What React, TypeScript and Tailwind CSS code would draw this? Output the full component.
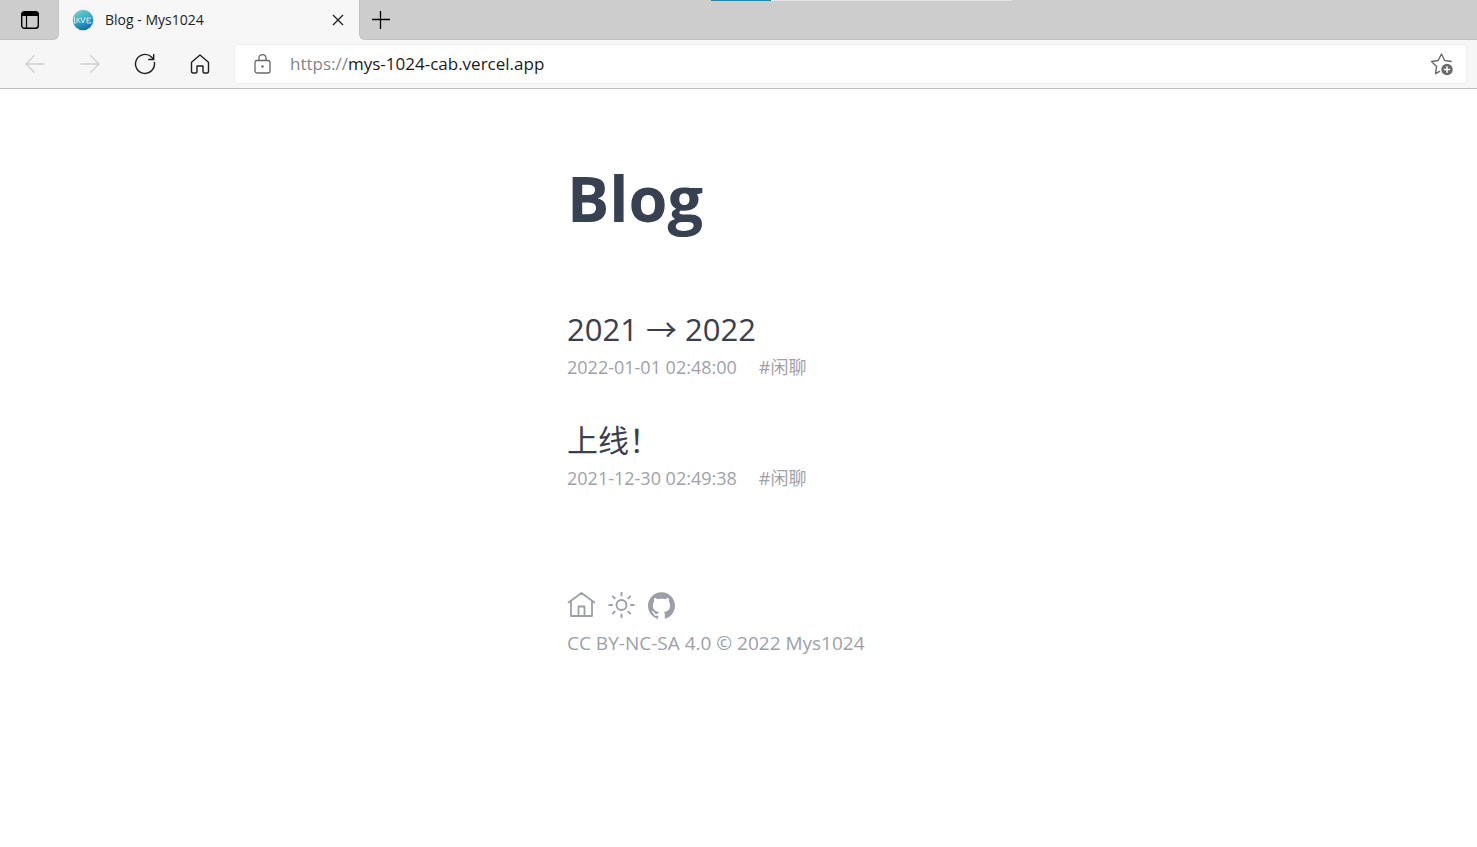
import type { ReactNode } from 'react';
import { SiGithub } from 'react-icons/si';

type Post = { title: string; date: string; tag: string };

const posts: Post[] = [
  { title: '2021 → 2022', date: '2022-01-01 02:48:00', tag: '#闲聊' },
  { title: '上线！', date: '2021-12-30 02:49:38', tag: '#闲聊' },
];

function IconButton({ label, disabled, className, children }: { label: string; disabled?: boolean; className: string; children: ReactNode }) {
  return (
    <button type="button" aria-label={label} disabled={disabled} className={`flex shrink-0 items-center justify-center ${className}`}>
      {children}
    </button>
  );
}

function TabStrip() {
  return (
    <div className="relative flex h-10 bg-[#f7f7f7]">
      <div className="flex w-[59px] shrink-0 rounded-br-md border-r border-b border-[#c2c2c2] bg-[#cdcdcd]">
        <IconButton label="Tab actions" className="w-[59px] text-black">
          <svg width="20" height="20" viewBox="0 0 20 20" fill="none" stroke="currentColor">
            <rect x="1.7" y="1.7" width="16.6" height="16.6" rx="2.8" strokeWidth="1.4" />
            <path d="M1.5 6V4a2.5 2.5 0 0 1 2.5-2.5h12A2.5 2.5 0 0 1 18.5 4v2z" fill="currentColor" stroke="none" />
            <path d="M6.5 5.5v12.5" strokeWidth="1.2" />
          </svg>
        </IconButton>
      </div>
      <div className="flex w-[300px] shrink-0 items-center rounded-tr-md bg-[#f7f7f7] pr-[11px] pl-3">
        <svg width="24" height="24" viewBox="0 0 24 24" aria-hidden="true">
          <defs>
            <linearGradient id="favicon" x1="0.3" y1="0" x2="0.7" y2="1">
              <stop offset="0" stopColor="#72d4cc" />
              <stop offset="0.5" stopColor="#35a5c4" />
              <stop offset="1" stopColor="#1762a8" />
            </linearGradient>
          </defs>
          <circle cx="12" cy="12" r="10.3" fill="url(#favicon)" />
          <g fill="none" stroke="#d9f1f6" strokeWidth="0.9">
            <path d="M3.5 9v6M2.5 15h2.5M6 15v-5M6 12.5l3-2.5M7 12l2.5 3" />
            <path d="M10 10l2 5 2-5M9.500 10h1.500M13 10h1.700" />
            <path d="M19.500 11v-1h-3.500v5h3.800v-1.300M16 12.400h2.500" />
          </g>
        </svg>
        <span className="ml-[10px] flex-1 text-[14px] leading-5 text-[#222]">Blog - Mys1024</span>
        <IconButton label="Close tab" className="size-[20px] text-[#222]">
          <svg width="12" height="12" viewBox="0 0 12 12" fill="none" stroke="currentColor" strokeWidth="1.4">
            <path d="M1 1l10 10M11 1L1 11" />
          </svg>
        </IconButton>
      </div>
      <div className="flex flex-1 items-center rounded-bl-md border-b border-l border-[#c2c2c2] bg-[#cdcdcd]">
        <IconButton label="New tab" className="ml-1 size-[34px] text-black">
          <svg width="18" height="18" viewBox="0 0 18 18" fill="none" stroke="currentColor" strokeWidth="1.3">
            <path d="M8.500 0v18M0 8.500h18" />
          </svg>
        </IconButton>
      </div>
      <div className="absolute top-0 left-[711px] flex h-px w-[301px] bg-[#e4e4e4]">
        <div className="w-[60px] bg-[#2487a8]" />
      </div>
    </div>
  );
}

function Toolbar() {
  return (
    <div className="flex h-[49px] items-center border-b border-[#bcbcbc] bg-[#f6f6f6] pr-[11px] pb-px pl-[7px]">
      <IconButton label="Back" disabled className="w-[55px] text-[#d0d0d0]">
        <svg width="20" height="20" viewBox="0 0 20 20" fill="none" stroke="currentColor" strokeWidth="1.4">
          <path d="M19.5 10H1M9.5 1.5L1 10l8.5 8.5" />
        </svg>
      </IconButton>
      <IconButton label="Forward" disabled className="w-[55px] text-[#d0d0d0]">
        <svg width="20" height="20" viewBox="0 0 20 20" fill="none" stroke="currentColor" strokeWidth="1.4">
          <path d="M.5 10H19M10.5 1.5L19 10l-8.5 8.5" />
        </svg>
      </IconButton>
      <IconButton label="Refresh" className="w-[55px] text-[#1f1f1f]">
        <svg width="22" height="22" viewBox="0 0 22 22" fill="none" stroke="currentColor" strokeWidth="1.4">
          <path d="M20.3 9A9.5 9.5 0 1 1 17.5 4l2 2.3M19.7 1v5.5h-5.5" />
        </svg>
      </IconButton>
      <IconButton label="Home" className="w-[55px] text-[#1f1f1f]">
        <svg width="20" height="20" viewBox="0 0 20 20" fill="none" stroke="currentColor" strokeWidth="1.4" strokeLinejoin="round">
          <path d="M1.5 8.3L10 1l8.5 7.3V17.500q0 1.500-1.500 1.500h-2.500q-1.500 0-1.500-1.500V12H7v5.500Q7 19 5.500 19H3q-1.500 0-1.500-1.500z" />
        </svg>
      </IconButton>
      <div className="ml-2 flex h-[38px] min-w-0 flex-1 items-center rounded bg-white pr-3 pl-[18px] shadow-[0_0_2px_#e4e4e4]">
        <svg width="19" height="20" viewBox="0 0 18 20" fill="none" stroke="#686868" strokeWidth="1.3" aria-hidden="true">
          <rect x="1.5" y="6.500" width="15" height="12.500" rx="2" />
          <path d="M5.500 6.500V4a3.500 3.500 0 0 1 7 0v2.500" />
          <circle cx="9" cy="12.500" r="1.200" fill="#686868" stroke="none" />
        </svg>
        <a href="https://mys-1024-cab.vercel.app" className="ml-[18px] flex-1 text-[17px] leading-6 text-[#1a1a1a]">
          <span className="text-[#858585]">https://</span>mys-1024-cab.vercel.app
        </a>
        <IconButton label="Add to favorites" className="size-6 text-[#696969]">
          <svg width="24" height="24" viewBox="0 0 24 24" fill="none" stroke="currentColor" strokeWidth="1.4" strokeLinejoin="round">
            <path d="M10 19.200l-4.500 2.500 1.100-7.200L1.500 9.500l6.700-1L11.500 2l3.200 6.500 7 1" />
            <circle cx="17" cy="17.500" r="5.700" fill="currentColor" stroke="none" />
            <path d="M17 14.300v6.400M13.800 17.500h6.400" stroke="#fff" strokeWidth="1.500" />
          </svg>
        </IconButton>
      </div>
    </div>
  );
}

function HouseIcon() {
  return (
    <svg width="28" height="28" viewBox="0 0 28 28" fill="none" stroke="currentColor" strokeWidth="1.8" strokeLinejoin="round" strokeLinecap="round">
      <path d="M1.500 11.500L14.500 2l13 9.500M4 9.800V25h21V9.800M11.500 25v-9.500h6V25" />
    </svg>
  );
}

function SunIcon() {
  return (
    <svg width="28" height="28" viewBox="0 0 28 28" fill="none" stroke="currentColor" strokeWidth="1.9">
      <circle cx="14.500" cy="14" r="5" />
      <path d="M14.500 1v4.300M14.500 22.700V27M1.500 14h4.300M23.200 14h4.300M5.300 4.800l3 3M20.700 20.200l3 3M23.700 4.800l-3 3M8.300 20.200l-3 3" />
    </svg>
  );
}

export default function App() {
  return (
    <div className="min-h-screen bg-white font-['Open_Sans','Noto_Sans_CJK_SC',sans-serif]">
      <header>
        <TabStrip />
        <Toolbar />
      </header>
      <div className="mx-auto max-w-[343px] pt-[65px] pb-16">
        <main>
          <h1 className="text-[63px] leading-[88px] font-bold text-[#374151]">Blog</h1>
          <ul className="mt-[62px] space-y-[36px]">
            {posts.map((post) => (
              <li key={post.date}>
                <h2 className="text-[31px] leading-[50px] text-[#3b3f4d]">
                  <a href="#post">{post.title}</a>
                </h2>
                <p className="flex gap-[22px] pt-px text-[18px] leading-6 text-[#9fa1a8]">
                  <time>{post.date}</time>
                  <span>{post.tag}</span>
                </p>
              </li>
            ))}
          </ul>
        </main>
        <footer className="mt-[101px] text-[#9c9fa7]">
          <nav className="flex items-center gap-3">
            <a href="#home" aria-label="Home"><HouseIcon /></a>
            <button type="button" aria-label="Toggle theme"><SunIcon /></button>
            <a href="https://github.com" aria-label="GitHub" className="flex size-7 items-center justify-end"><SiGithub size={27} /></a>
          </nav>
          <p className="mt-3 text-[19px] leading-6">CC BY-NC-SA 4.0 © 2022 Mys1024</p>
        </footer>
      </div>
    </div>
  );
}
